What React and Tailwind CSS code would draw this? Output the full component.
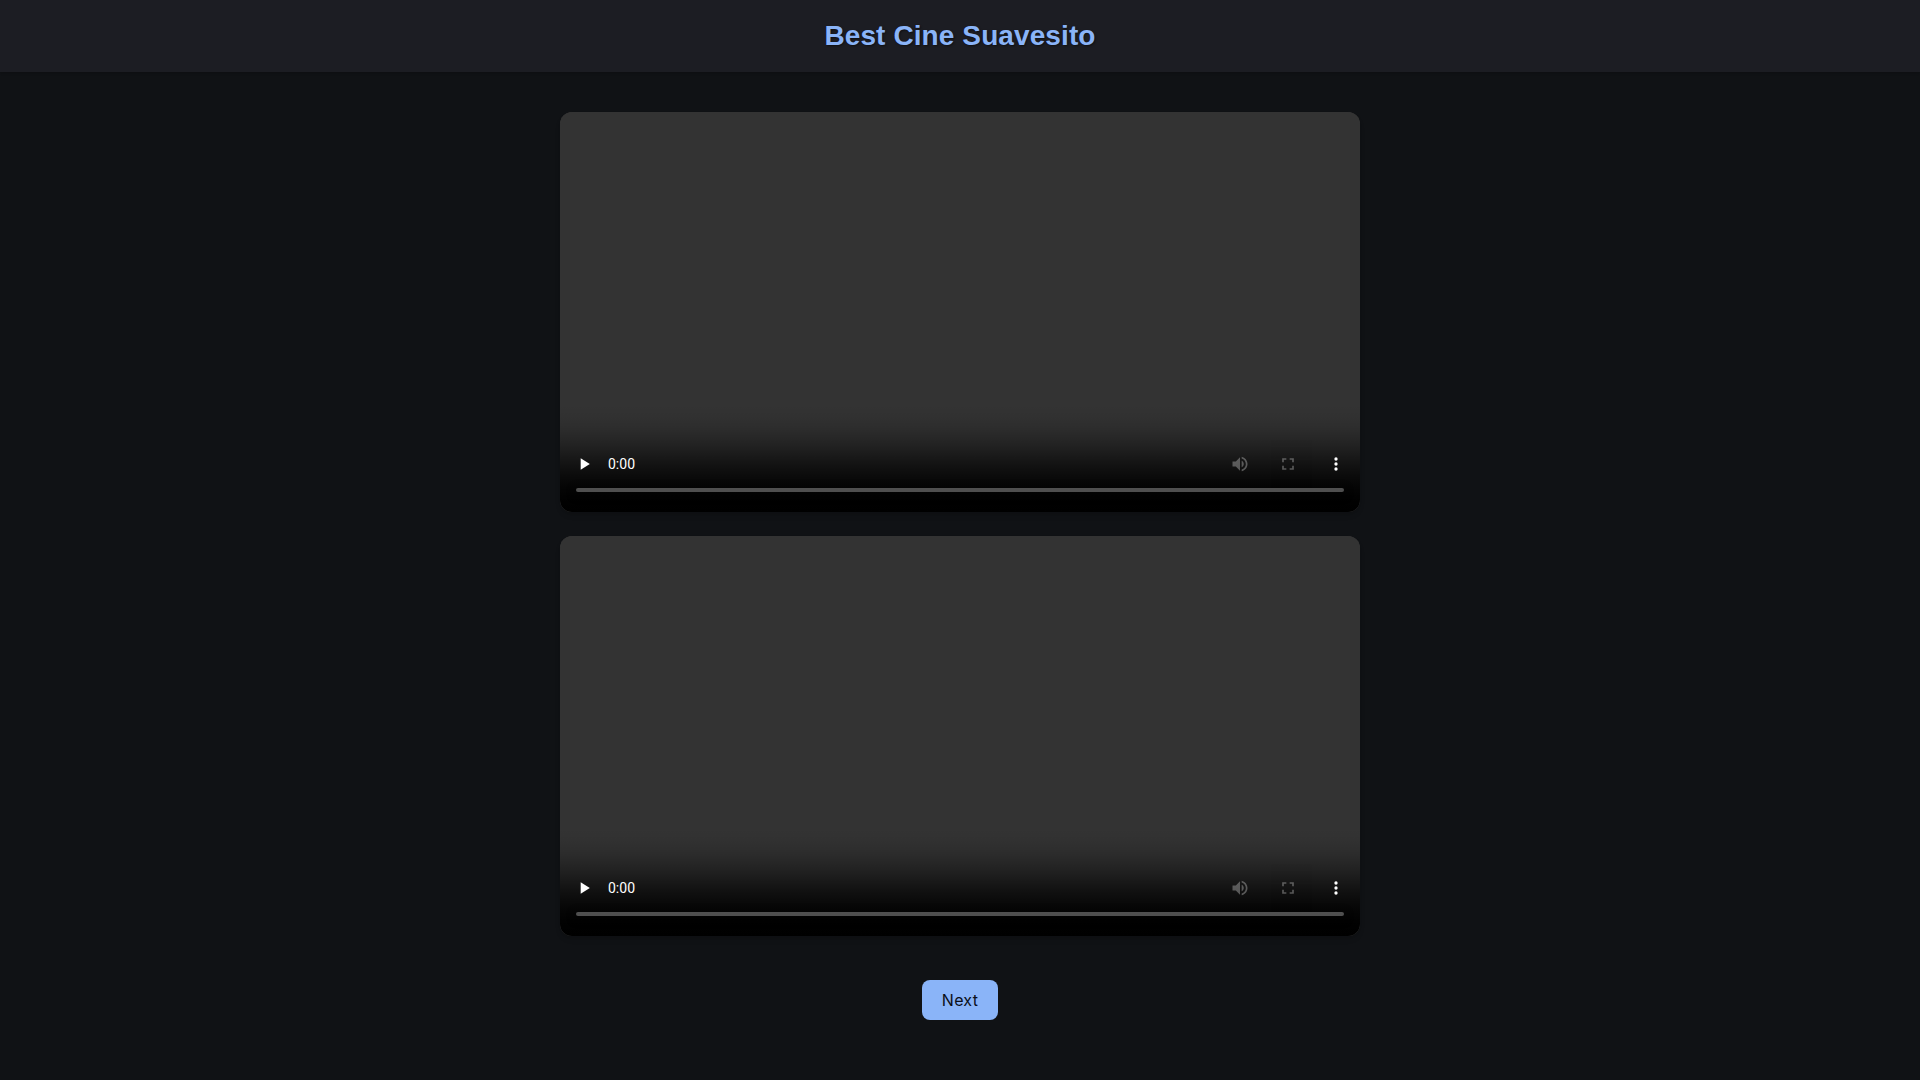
export default function App() {
  return (
    <div className="min-h-screen bg-[#101215] font-['Inter',sans-serif] tracking-[0.25px]">
      <header className="h-[72px] bg-[#1c1d23] flex items-center justify-center shadow-sm">
        <h1 className="font-['Liberation_Sans',sans-serif] font-bold text-[28px] tracking-[0.1px] text-[#8ab4f8] [text-shadow:1px_1px_2px_rgba(0,0,0,0.5)]">
          Best Cine Suavesito
        </h1>
      </header>

      <main className="flex flex-col items-center pt-10">
        <div className="flex flex-col gap-6 w-[800px]">
          <video controls preload="none" src="movie1.mp4" className="w-full h-[400px] rounded-xl bg-[#333333] shadow-md"></video>
          <video controls preload="none" src="movie2.mp4" className="w-full h-[400px] rounded-xl bg-[#333333] shadow-md"></video>
        </div>
        <button type="button" className="mt-11 w-[76px] h-10 rounded-lg bg-[#8ab4f8] text-[#0b0f19] text-base font-normal">
          Next
        </button>
      </main>
    </div>
  );
}
